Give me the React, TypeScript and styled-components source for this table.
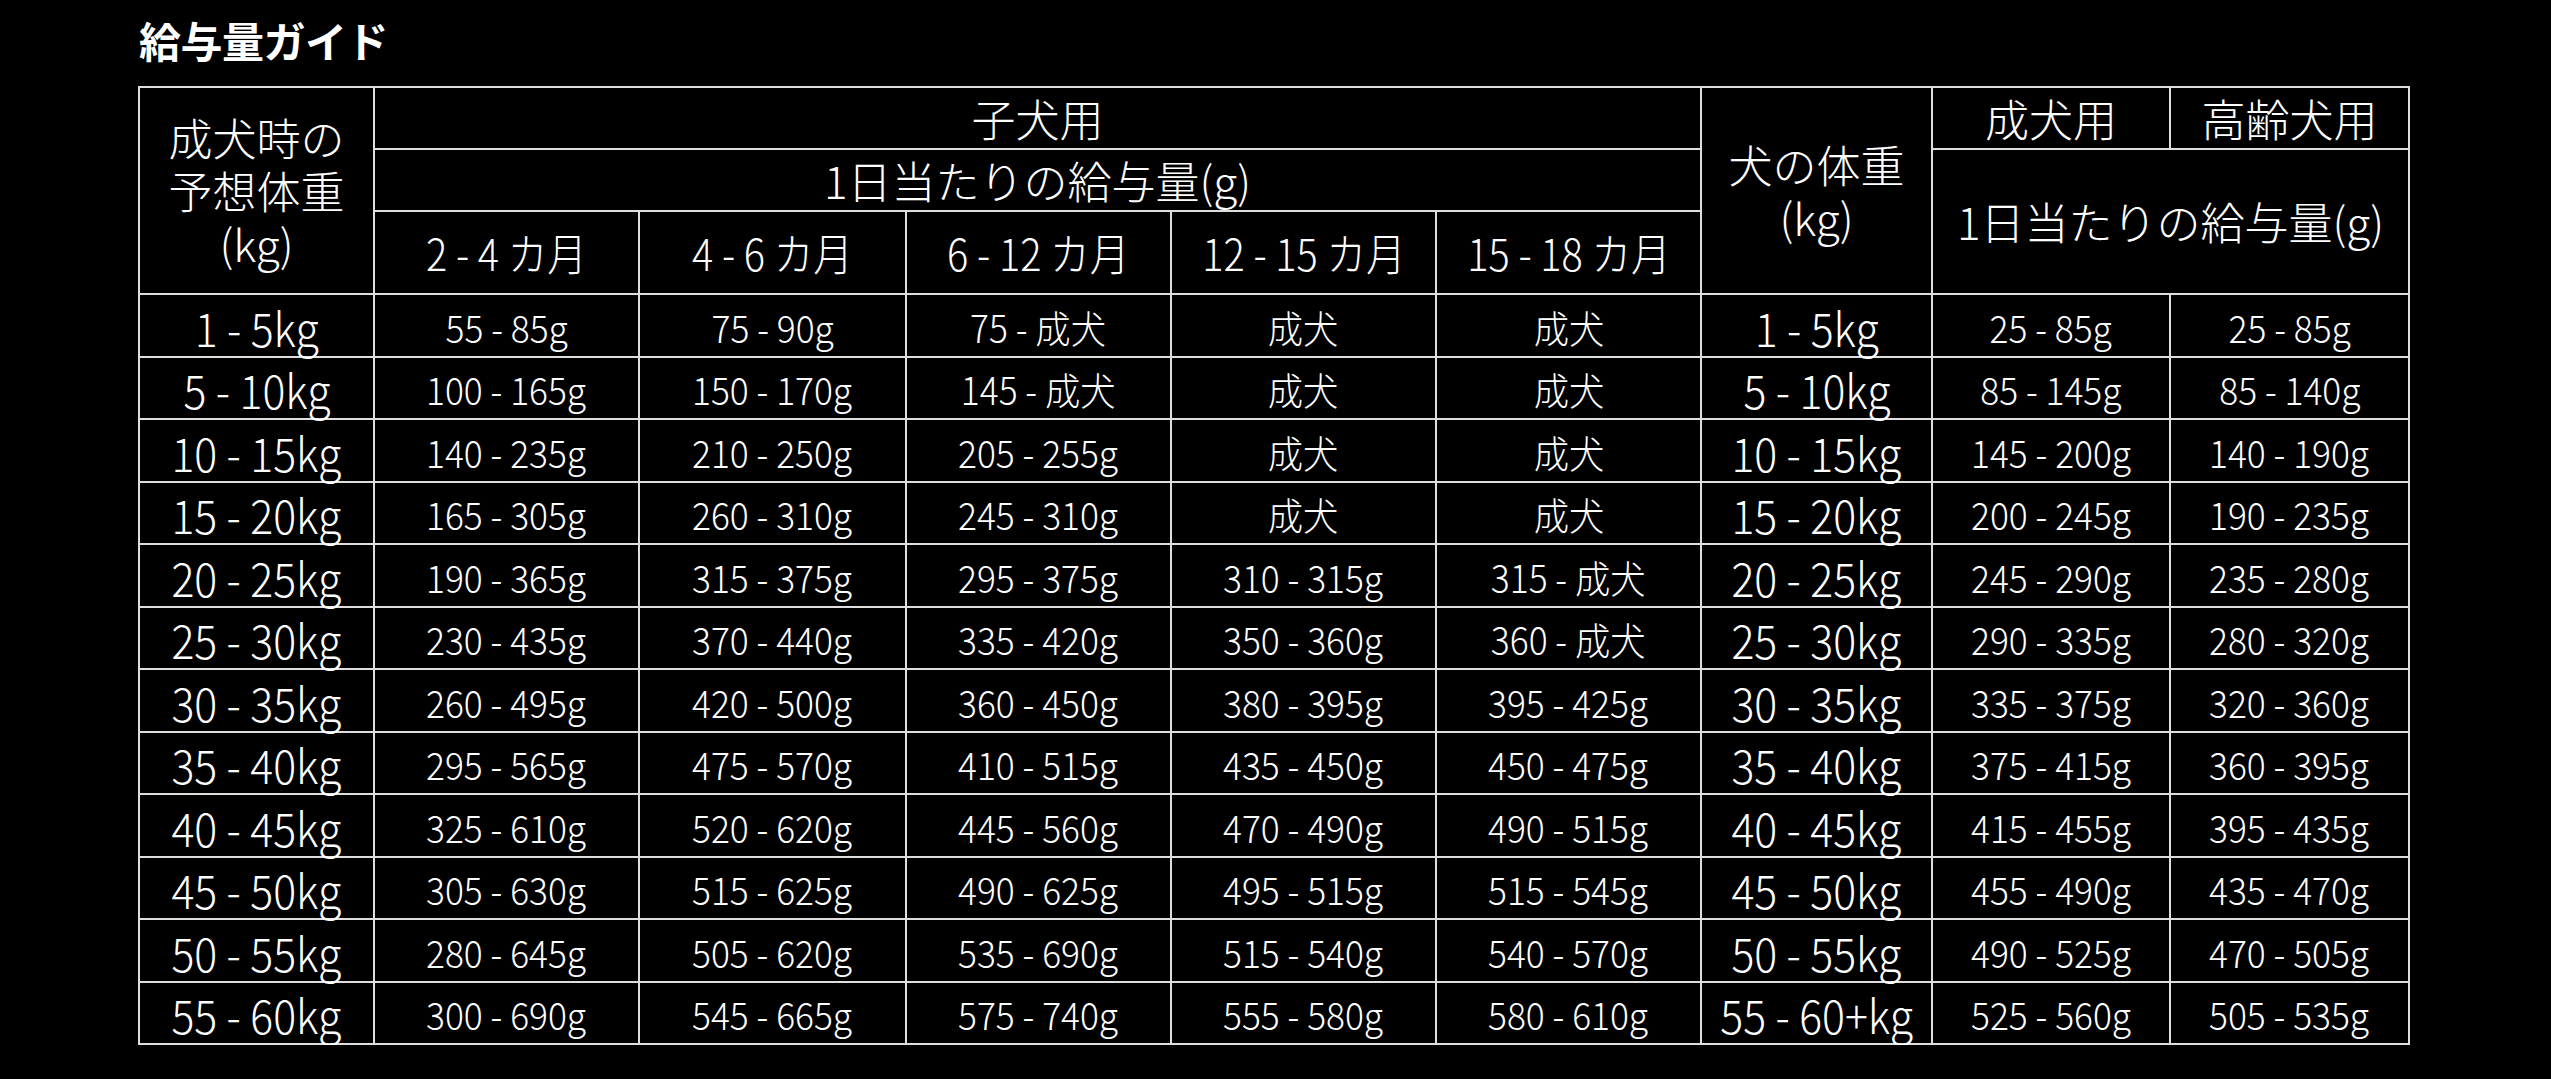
import React from "react";
import styled, { createGlobalStyle } from "styled-components";

const GlobalStyle = createGlobalStyle`
  html, body {
    margin: 0;
    padding: 0;
    background: #000;
  }
`;

const FONT = `"Noto Sans CJK JP", sans-serif`;

type Row = string[];

const rows: Row[] = [
  ["1 - 5kg", "55 - 85g", "75 - 90g", "75 - 成犬", "成犬", "成犬", "1 - 5kg", "25 - 85g", "25 - 85g"],
  ["5 - 10kg", "100 - 165g", "150 - 170g", "145 - 成犬", "成犬", "成犬", "5 - 10kg", "85 - 145g", "85 - 140g"],
  ["10 - 15kg", "140 - 235g", "210 - 250g", "205 - 255g", "成犬", "成犬", "10 - 15kg", "145 - 200g", "140 - 190g"],
  ["15 - 20kg", "165 - 305g", "260 - 310g", "245 - 310g", "成犬", "成犬", "15 - 20kg", "200 - 245g", "190 - 235g"],
  ["20 - 25kg", "190 - 365g", "315 - 375g", "295 - 375g", "310 - 315g", "315 - 成犬", "20 - 25kg", "245 - 290g", "235 - 280g"],
  ["25 - 30kg", "230 - 435g", "370 - 440g", "335 - 420g", "350 - 360g", "360 - 成犬", "25 - 30kg", "290 - 335g", "280 - 320g"],
  ["30 - 35kg", "260 - 495g", "420 - 500g", "360 - 450g", "380 - 395g", "395 - 425g", "30 - 35kg", "335 - 375g", "320 - 360g"],
  ["35 - 40kg", "295 - 565g", "475 - 570g", "410 - 515g", "435 - 450g", "450 - 475g", "35 - 40kg", "375 - 415g", "360 - 395g"],
  ["40 - 45kg", "325 - 610g", "520 - 620g", "445 - 560g", "470 - 490g", "490 - 515g", "40 - 45kg", "415 - 455g", "395 - 435g"],
  ["45 - 50kg", "305 - 630g", "515 - 625g", "490 - 625g", "495 - 515g", "515 - 545g", "45 - 50kg", "455 - 490g", "435 - 470g"],
  ["50 - 55kg", "280 - 645g", "505 - 620g", "535 - 690g", "515 - 540g", "540 - 570g", "50 - 55kg", "490 - 525g", "470 - 505g"],
  ["55 - 60kg", "300 - 690g", "545 - 665g", "575 - 740g", "555 - 580g", "580 - 610g", "55 - 60+kg", "525 - 560g", "505 - 535g"],
];

const colWidths = [235, 265, 267, 265, 265, 265, 231, 238, 239];
const months = ["2 - 4 カ月", "4 - 6 カ月", "6 - 12 カ月", "12 - 15 カ月", "15 - 18 カ月"];

const Page = styled.div`
  padding: 15px 0 0 138px;
  color: #fff;
`;

const Title = styled.h1`
  margin: 0 0 21px 1px;
  font-family: "Noto Sans CJK JP", sans-serif;
  font-weight: 700;
  font-size: 42px;
  line-height: 50px;
  letter-spacing: -0.5px;
`;

const Table = styled.table`
  border-collapse: collapse;
  table-layout: fixed;
  width: 2272px;
  font-family: ${FONT};
  font-weight: 300;
  color: #fff;
`;

const HeadRow = styled.tr<{ $h: number }>`
  height: ${(p) => p.$h}px;
`;

const BodyRow = styled.tr`
  height: 62.5px;
`;

const Head = styled.th`
  border: 2px solid #dedede;
  padding: 0;
  font-weight: 300;
  font-size: 44px;
  line-height: 53px;
  text-align: center;
  vertical-align: middle;
  white-space: nowrap;
`;

const Cell = styled.td<{ $big?: boolean }>`
  border: 2px solid #dedede;
  padding: 3px 0 0;
  font-size: ${(p) => (p.$big ? 46 : 38)}px;
  line-height: 1;
  text-align: center;
  vertical-align: middle;
  white-space: nowrap;
`;

// narrows the latin-heavy labels towards the condensed face of the original
const Squeeze = styled.span<{ $x: number }>`
  display: inline-block;
  transform: scaleX(${(p) => p.$x});
`;

export default function App() {
  return (
    <>
      <GlobalStyle />
      <Page>
        <Title>給与量ガイド</Title>
        <Table>
          <colgroup>
            {colWidths.map((w, i) => (
              <col key={i} style={{ width: w }} />
            ))}
          </colgroup>
          <thead>
            <HeadRow $h={62}>
              <Head rowSpan={3}>
                成犬時の
                <br />
                予想体重
                <br />
                (kg)
              </Head>
              <Head colSpan={5}>子犬用</Head>
              <Head rowSpan={3}>
                犬の体重
                <br />
                (kg)
              </Head>
              <Head>成犬用</Head>
              <Head>高齢犬用</Head>
            </HeadRow>
            <HeadRow $h={62}>
              <Head colSpan={5}>1日当たりの給与量(g)</Head>
              <Head colSpan={2} rowSpan={2}>
                1日当たりの給与量(g)
              </Head>
            </HeadRow>
            <HeadRow $h={83}>
              {months.map((m) => (
                <Head key={m}>
                  <Squeeze $x={0.9}>{m}</Squeeze>
                </Head>
              ))}
            </HeadRow>
          </thead>
          <tbody>
            {rows.map((r, i) => (
              <BodyRow key={i}>
                {r.map((v, j) => (
                  <Cell key={j} $big={j === 0 || j === 6}>
                    <Squeeze $x={0.93}>{v}</Squeeze>
                  </Cell>
                ))}
              </BodyRow>
            ))}
          </tbody>
        </Table>
      </Page>
    </>
  );
}
